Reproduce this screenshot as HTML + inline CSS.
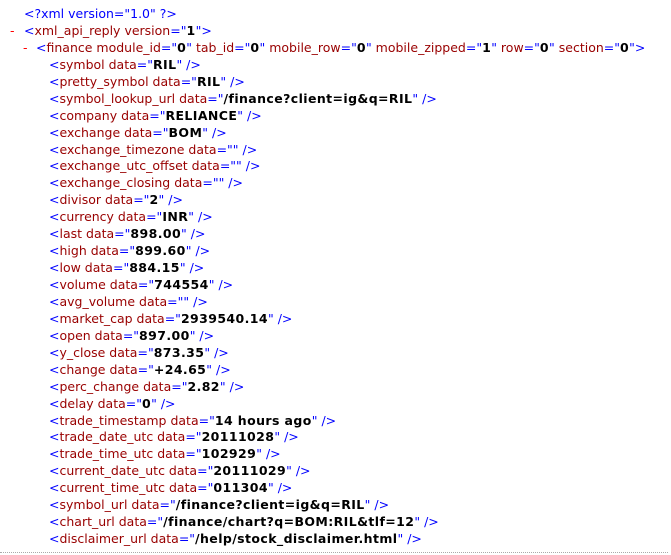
<!DOCTYPE html>
<html><head><style>
body{margin:0;width:671px;height:555px;background:#fff;overflow:hidden;position:relative;font-family:"DejaVu Sans",Verdana,sans-serif;font-size:12.5px}
#c{position:absolute;top:6px;left:0;line-height:16.95px;white-space:nowrap}
.l{height:16.95px}
.m{color:#00f}.t{color:#900}.v{color:#000;font-weight:bold;letter-spacing:0.4px}.d{color:#f00;position:absolute}
#b{position:absolute;left:0;right:3px;top:552px;height:0;border-top:1px dotted #aaa}
</style></head><body>
<div id="c">
<div class="l" style="padding-left:24px"><span class="m">&lt;?xml version="1.0" ?&gt;</span></div>
<div class="l" style="padding-left:24px"><span class="d" style="left:10px">-</span><span class="m">&lt;</span><span class="t">xml_api_reply</span><span class="t"> version</span><span class="m">="</span><span class="v">1</span><span class="m">"&gt;</span></div>
<div class="l" style="padding-left:36px"><span class="d" style="left:23px">-</span><span class="m">&lt;</span><span class="t">finance</span><span class="t"> module_id</span><span class="m">="</span><span class="v">0</span><span class="m">"</span><span class="t"> tab_id</span><span class="m">="</span><span class="v">0</span><span class="m">"</span><span class="t"> mobile_row</span><span class="m">="</span><span class="v">0</span><span class="m">"</span><span class="t"> mobile_zipped</span><span class="m">="</span><span class="v">1</span><span class="m">"</span><span class="t"> row</span><span class="m">="</span><span class="v">0</span><span class="m">"</span><span class="t"> section</span><span class="m">="</span><span class="v">0</span><span class="m">"&gt;</span></div>
<div class="l" style="padding-left:49px"><span class="m">&lt;</span><span class="t">symbol data</span><span class="m">="</span><span class="v">RIL</span><span class="m">" /&gt;</span></div>
<div class="l" style="padding-left:49px"><span class="m">&lt;</span><span class="t">pretty_symbol data</span><span class="m">="</span><span class="v">RIL</span><span class="m">" /&gt;</span></div>
<div class="l" style="padding-left:49px"><span class="m">&lt;</span><span class="t">symbol_lookup_url data</span><span class="m">="</span><span class="v">/finance?client=ig&amp;q=RIL</span><span class="m">" /&gt;</span></div>
<div class="l" style="padding-left:49px"><span class="m">&lt;</span><span class="t">company data</span><span class="m">="</span><span class="v">RELIANCE</span><span class="m">" /&gt;</span></div>
<div class="l" style="padding-left:49px"><span class="m">&lt;</span><span class="t">exchange data</span><span class="m">="</span><span class="v">BOM</span><span class="m">" /&gt;</span></div>
<div class="l" style="padding-left:49px"><span class="m">&lt;</span><span class="t">exchange_timezone data</span><span class="m">="" /&gt;</span></div>
<div class="l" style="padding-left:49px"><span class="m">&lt;</span><span class="t">exchange_utc_offset data</span><span class="m">="" /&gt;</span></div>
<div class="l" style="padding-left:49px"><span class="m">&lt;</span><span class="t">exchange_closing data</span><span class="m">="" /&gt;</span></div>
<div class="l" style="padding-left:49px"><span class="m">&lt;</span><span class="t">divisor data</span><span class="m">="</span><span class="v">2</span><span class="m">" /&gt;</span></div>
<div class="l" style="padding-left:49px"><span class="m">&lt;</span><span class="t">currency data</span><span class="m">="</span><span class="v">INR</span><span class="m">" /&gt;</span></div>
<div class="l" style="padding-left:49px"><span class="m">&lt;</span><span class="t">last data</span><span class="m">="</span><span class="v">898.00</span><span class="m">" /&gt;</span></div>
<div class="l" style="padding-left:49px"><span class="m">&lt;</span><span class="t">high data</span><span class="m">="</span><span class="v">899.60</span><span class="m">" /&gt;</span></div>
<div class="l" style="padding-left:49px"><span class="m">&lt;</span><span class="t">low data</span><span class="m">="</span><span class="v">884.15</span><span class="m">" /&gt;</span></div>
<div class="l" style="padding-left:49px"><span class="m">&lt;</span><span class="t">volume data</span><span class="m">="</span><span class="v">744554</span><span class="m">" /&gt;</span></div>
<div class="l" style="padding-left:49px"><span class="m">&lt;</span><span class="t">avg_volume data</span><span class="m">="" /&gt;</span></div>
<div class="l" style="padding-left:49px"><span class="m">&lt;</span><span class="t">market_cap data</span><span class="m">="</span><span class="v">2939540.14</span><span class="m">" /&gt;</span></div>
<div class="l" style="padding-left:49px"><span class="m">&lt;</span><span class="t">open data</span><span class="m">="</span><span class="v">897.00</span><span class="m">" /&gt;</span></div>
<div class="l" style="padding-left:49px"><span class="m">&lt;</span><span class="t">y_close data</span><span class="m">="</span><span class="v">873.35</span><span class="m">" /&gt;</span></div>
<div class="l" style="padding-left:49px"><span class="m">&lt;</span><span class="t">change data</span><span class="m">="</span><span class="v">+24.65</span><span class="m">" /&gt;</span></div>
<div class="l" style="padding-left:49px"><span class="m">&lt;</span><span class="t">perc_change data</span><span class="m">="</span><span class="v">2.82</span><span class="m">" /&gt;</span></div>
<div class="l" style="padding-left:49px"><span class="m">&lt;</span><span class="t">delay data</span><span class="m">="</span><span class="v">0</span><span class="m">" /&gt;</span></div>
<div class="l" style="padding-left:49px"><span class="m">&lt;</span><span class="t">trade_timestamp data</span><span class="m">="</span><span class="v">14 hours ago</span><span class="m">" /&gt;</span></div>
<div class="l" style="padding-left:49px"><span class="m">&lt;</span><span class="t">trade_date_utc data</span><span class="m">="</span><span class="v">20111028</span><span class="m">" /&gt;</span></div>
<div class="l" style="padding-left:49px"><span class="m">&lt;</span><span class="t">trade_time_utc data</span><span class="m">="</span><span class="v">102929</span><span class="m">" /&gt;</span></div>
<div class="l" style="padding-left:49px"><span class="m">&lt;</span><span class="t">current_date_utc data</span><span class="m">="</span><span class="v">20111029</span><span class="m">" /&gt;</span></div>
<div class="l" style="padding-left:49px"><span class="m">&lt;</span><span class="t">current_time_utc data</span><span class="m">="</span><span class="v">011304</span><span class="m">" /&gt;</span></div>
<div class="l" style="padding-left:49px"><span class="m">&lt;</span><span class="t">symbol_url data</span><span class="m">="</span><span class="v">/finance?client=ig&amp;q=RIL</span><span class="m">" /&gt;</span></div>
<div class="l" style="padding-left:49px"><span class="m">&lt;</span><span class="t">chart_url data</span><span class="m">="</span><span class="v">/finance/chart?q=BOM:RIL&amp;tlf=12</span><span class="m">" /&gt;</span></div>
<div class="l" style="padding-left:49px"><span class="m">&lt;</span><span class="t">disclaimer_url data</span><span class="m">="</span><span class="v">/help/stock_disclaimer.html</span><span class="m">" /&gt;</span></div>
</div>
<div id="b"></div>
</body></html>
